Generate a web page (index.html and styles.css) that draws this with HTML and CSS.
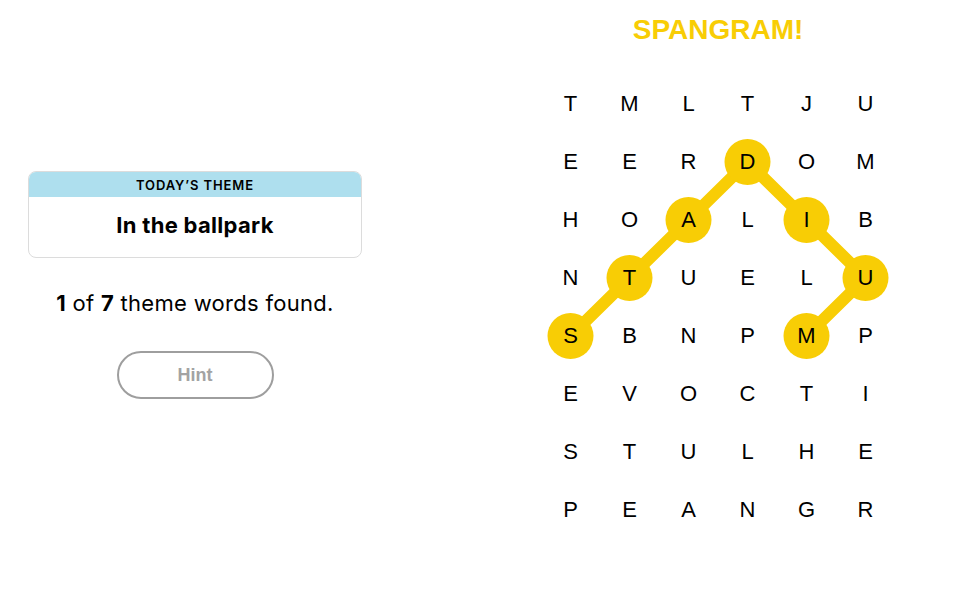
FILE: index.html
```html
<!DOCTYPE html>
<html lang="en">
  <head>
    <meta charset="UTF-8" />
    <title>Strands</title>
    <link rel="stylesheet" href="styles.css">
  </head>
  <body>
    <div class="game">
      <div class="sidebar">
        <div class="theme-card">
          <div class="theme-label">TODAY’S THEME</div>
          <div class="theme-name">In the ballpark</div>
        </div>
        <p class="progress"><b>1</b> of <b>7</b> theme words found.</p>
        <button class="hint">Hint</button>
      </div>
      <div class="board">
        <h1 class="status">SPANGRAM!</h1>
        <div class="grid-wrap">
          <svg class="trail" width="354" height="464" viewBox="0 0 354 464">
            <polyline points="29.5,261 88.5,203 147.5,145 206.5,87 265.5,145 324.5,203 265.5,261"
              fill="none" stroke="#f8cd05" stroke-width="12" stroke-linejoin="round" />
            <circle cx="29.5" cy="261" r="23" fill="#f8cd05" />
            <circle cx="88.5" cy="203" r="23" fill="#f8cd05" />
            <circle cx="147.5" cy="145" r="23" fill="#f8cd05" />
            <circle cx="206.5" cy="87" r="23" fill="#f8cd05" />
            <circle cx="265.5" cy="145" r="23" fill="#f8cd05" />
            <circle cx="324.5" cy="203" r="23" fill="#f8cd05" />
            <circle cx="265.5" cy="261" r="23" fill="#f8cd05" />
          </svg>
          <div class="grid" id="grid"></div>
        </div>
      </div>
    </div>
    <script>
      const rows = ["TMLTJU", "EERDOM", "HOALIB", "NTUELU", "SBNPMP", "EVOCTI", "STULHE", "PEANGR"];
      const grid = document.getElementById("grid");
      rows.forEach(function (row) {
        for (const ch of row) {
          const cell = document.createElement("div");
          cell.className = "cell";
          cell.textContent = ch;
          grid.appendChild(cell);
        }
      });
    </script>
  </body>
</html>
```

FILE: styles.css
```css
body {
  margin: 0;
  background: #fff;
  color: #000;
  font-family: Inter, "Liberation Sans", Arial, sans-serif;
}

.game {
  display: flex;
  width: 959px;
}

.sidebar {
  width: 334px;
  padding: 171px 28px 0 28px;
  display: flex;
  flex-direction: column;
  align-items: center;
}

.theme-card {
  width: 100%;
  border: 1px solid #dcdcdc;
  border-radius: 8px;
  overflow: hidden;
  box-sizing: border-box;
}

.theme-label {
  background-color: #aedfee;
  height: 25px;
  line-height: 26px;
  text-align: center;
  font-size: 13px;
  font-weight: 600;
  letter-spacing: 0.9px;
}

.theme-name {
  height: 60px;
  line-height: 56px;
  text-align: center;
  font-size: 22px;
  font-weight: bold;
  letter-spacing: 0.3px;
}

.progress {
  margin: 33px 0 0 0;
  font-size: 22px;
  line-height: 24px;
  letter-spacing: 0.3px;
}

.hint {
  margin-top: 36px;
  width: 157px;
  height: 48px;
  border: 2px solid #9e9e9e;
  border-radius: 24px;
  background: #fff;
  color: #a3a3a3;
  font-family: "Liberation Sans", Arial, sans-serif;
  font-size: 18px;
  font-weight: bold;
}

.board {
  margin-left: 151px;
  width: 354px;
}

.status {
  margin: 10px 0 0 0;
  height: 65px;
  line-height: 40px;
  text-align: center;
  font-family: "Liberation Sans", Arial, sans-serif;
  font-size: 28px;
  font-weight: bold;
  color: #f8cd05;
}

.grid-wrap {
  position: relative;
}

.trail {
  position: absolute;
  left: 0;
  top: 0;
}

.grid {
  position: relative;
  display: grid;
  grid-template-columns: repeat(6, 59px);
  grid-auto-rows: 58px;
}

.cell {
  display: flex;
  align-items: center;
  justify-content: center;
  font-family: "Liberation Sans", Arial, sans-serif;
  font-size: 22px;
}
```
